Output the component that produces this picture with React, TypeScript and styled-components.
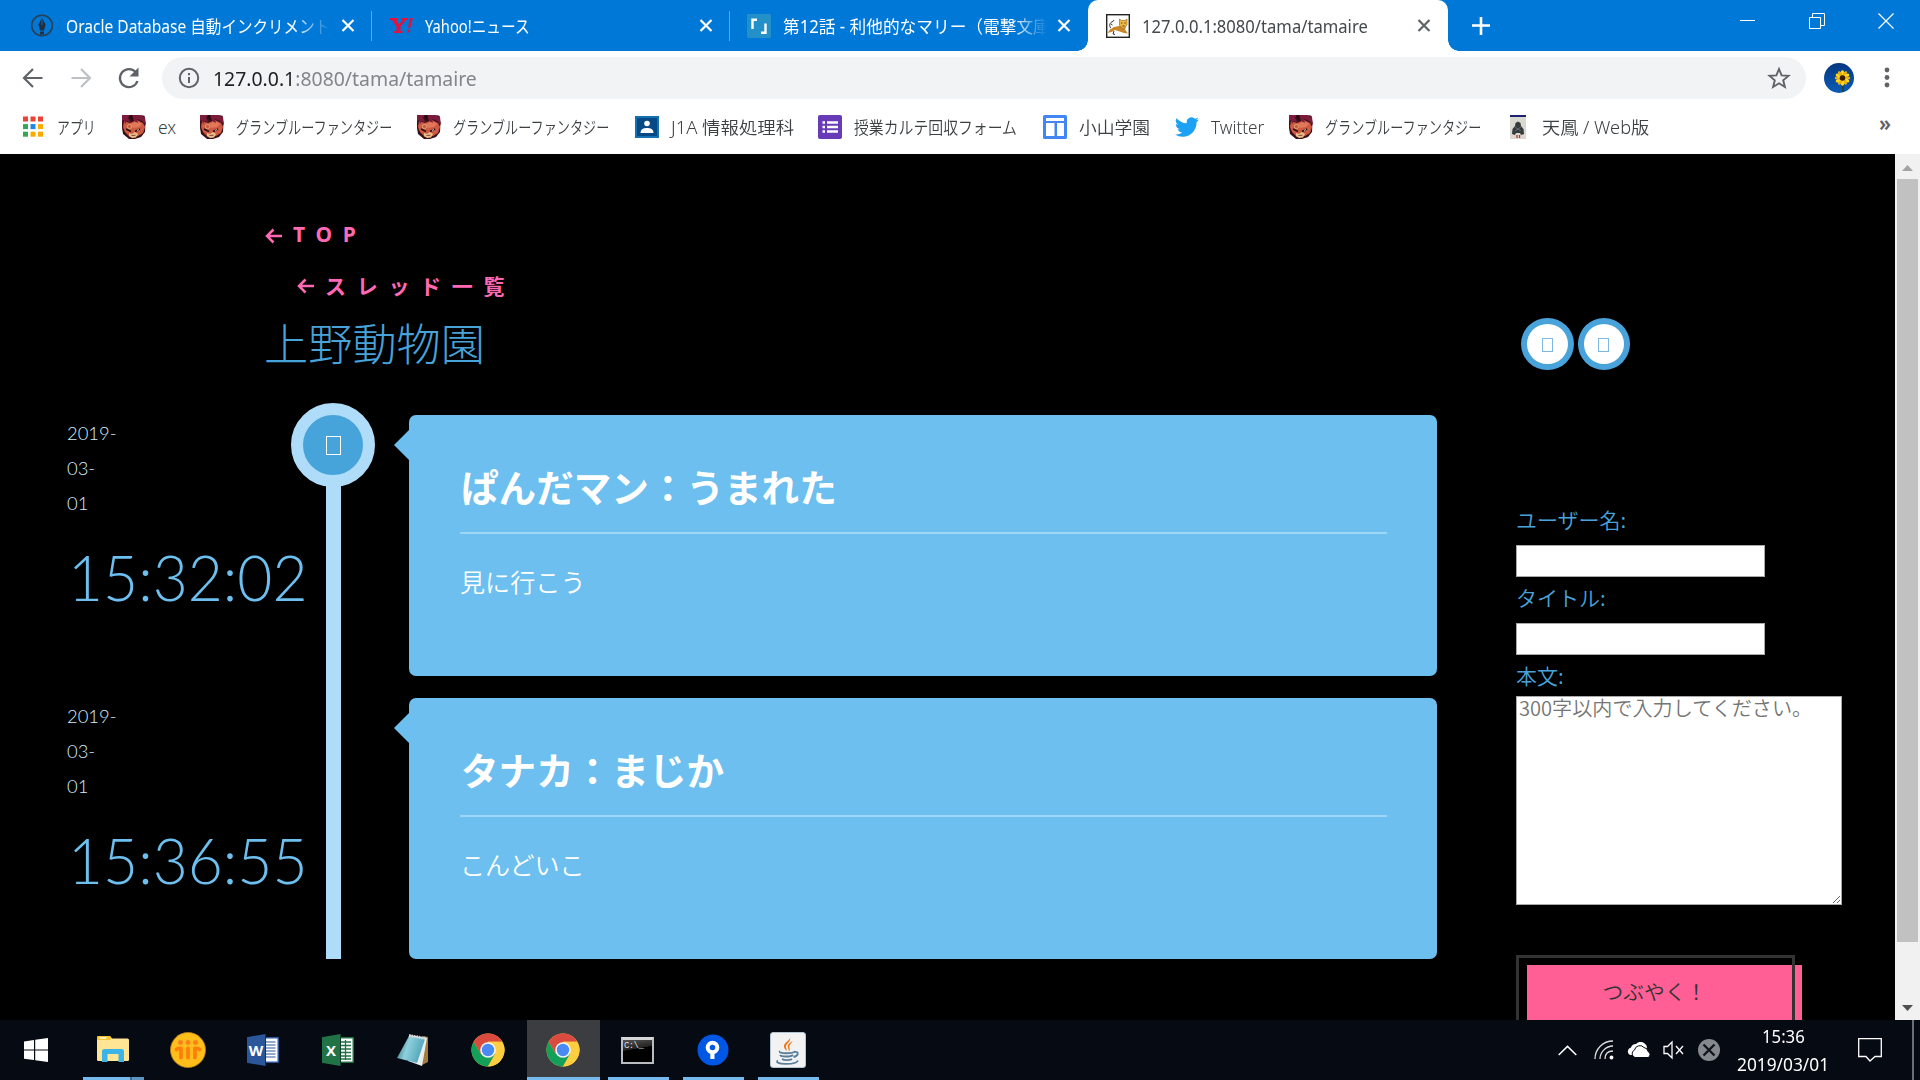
import React, { useLayoutEffect, useRef, useState } from 'react';
import styled, { createGlobalStyle } from 'styled-components';

const ui = `'Noto Sans', 'Noto Sans CJK JP', sans-serif`;
const jp = `'Noto Sans CJK JP', sans-serif`;

const Global = createGlobalStyle`
  *, *::before, *::after { box-sizing: border-box; }
  body { margin: 0; background: #000; font-family: ${ui}; overflow: hidden; }
  svg { display: block; flex: none; }
`;

/* ---------- text that is condensed to a given width ---------- */
const FitBox = styled.span<{ $w: number }>`
  display: block; flex: none; width: ${p => p.$w}px; white-space: nowrap;
`;
const FitInner = styled.span`
  display: inline-block; transform-origin: left center;
`;
function Fit({ w, children }: { w: number; children: React.ReactNode }) {
  const ref = useRef<HTMLSpanElement>(null);
  const [scale, setScale] = useState(1);
  useLayoutEffect(() => {
    if (ref.current) setScale(w / ref.current.offsetWidth);
  }, [w]);
  return <FitBox $w={w}><FitInner ref={ref} style={{ transform: `scaleX(${scale})` }}>{children}</FitInner></FitBox>;
}

const Screen = styled.div`
  width: 1920px; height: 1080px; display: flex; flex-direction: column; overflow: hidden; background: #000;
`;

/* ---------- tab strip ---------- */
const TabStrip = styled.header`
  height: 51px; flex: none; display: flex; background: #0078d7; color: #fff;
`;
const Tab = styled.div<{ $w: number; $pl: number; $sep?: boolean }>`
  width: ${p => p.$w}px; height: 51px; flex: none; display: flex; align-items: center;
  padding: 0 17px 0 ${p => p.$pl}px; font-size: 17.5px;
  background: linear-gradient(#5aa9e6, #5aa9e6) right 11px / ${p => (p.$sep ? '1.5px 30px' : '0 0')} no-repeat;
`;
const ActiveTab = styled(Tab)`
  background: #fff; color: #45494d; border-radius: 10px 10px 0 0; position: relative;
  &::before, &::after {
    content: ''; position: absolute; bottom: 0; width: 11px; height: 11px;
  }
  &::before { left: -11px; background: radial-gradient(circle at 0 0, #0078d7 10.5px, #fff 11px); }
  &::after { right: -11px; background: radial-gradient(circle at 100% 0, #0078d7 10.5px, #fff 11px); }
`;
const Favicon = styled.span`
  width: 24px; height: 24px; flex: none; margin-right: 12px; display: flex; align-items: center; justify-content: center;
`;
const TabTitle = styled.span<{ $fade?: boolean }>`
  flex: 1; min-width: 0; overflow: hidden; margin-top: 0;
  ${p => p.$fade && 'mask-image: linear-gradient(90deg, #000 228px, transparent 264px);'}
`;
const NewTab = styled.div`
  width: 65px; display: flex; align-items: center; justify-content: center;
`;
const Caption = styled.div`
  margin-left: auto; display: flex; align-items: flex-start; padding-top: 13px;
`;
const CaptionButton = styled.span`
  width: 69px; display: flex; justify-content: center;
`;

/* ---------- toolbar ---------- */
const Toolbar = styled.div`
  height: 54px; flex: none; background: #fff; display: flex; align-items: center; padding: 0 20px 0 20px;
`;
const NavButtons = styled.div`
  width: 142px; display: flex; gap: 22px; align-items: center;
`;
const Omnibox = styled.div`
  width: 1644px; height: 42px; border-radius: 21px; background: #f1f3f4; display: flex; align-items: center;
  padding: 0 15px 0 15px; font-size: 20px; color: #80868b;
`;
const Url = styled.div`
  flex: 1; margin-left: 12px; b { font-weight: 400; color: #202124; }
`;
const Avatar = styled.div`
  margin: 0 30px 0 18px;
`;

const Bookmarks = styled.nav`
  height: 49px; flex: none; background: #fff; display: flex; padding-left: 21px; color: #3c4043; font-size: 17.5px;
  font-weight: 350;
`;
const Bookmark = styled.div<{ $w: number }>`
  width: ${p => p.$w}px; flex: none; height: 43px; display: flex; align-items: center; gap: 12px;
`;
const More = styled.div`
  margin-left: auto; padding: 0 29px 0 0; font-size: 21px; font-weight: 600; line-height: 36px; color: #5f6368;
`;

/* ---------- page ---------- */
const Viewport = styled.main`
  height: 866px; flex: none; display: flex; background: #000; overflow: hidden;
`;
const Content = styled.div`
  width: 1437px; flex: none; display: flex; flex-direction: column;
`;
const PageHead = styled.div`
  height: 261px; padding: 54px 0 0 265px; display: flex; flex-direction: column;
`;
const BackLink = styled.a<{ $indent: number }>`
  display: flex; align-items: center; height: ${p => (p.$indent ? 49 : 52)}px; margin-left: ${p => p.$indent}px;
  font: 700 21px ${ui}; letter-spacing: 10.7px; color: #ff69b4; white-space: nowrap;
`;
const Arrow = styled.span`
  width: 28px; display: flex; padding-top: 3px;
`;
const Thread = styled.h1`
  margin: 2px 0 0 -1px; font: 300 44.200px/62px ${jp}; color: #47a3da;
`;
const Timeline = styled.div`
  display: grid; grid-template-columns: 326px 15px 1fr; grid-template-rows: 544px; height: 544px;
`;
const Times = styled.div`
  display: grid; grid-auto-rows: 283px; padding-left: 67px; height: 544px;
`;
const Time = styled.div`
  display: flex; flex-direction: column; white-space: nowrap; padding-top: 1px;
`;
const Day = styled.div`
  width: 54px; white-space: normal; font: 300 18.400px/35px Lato, sans-serif; color: #d3ecfb;
`;
const Clock = styled.div`
  font: 300 62.500px/76px Lato, sans-serif; color: #6cbfee; margin: 18px 0 0 1px;
`;
const Rail = styled.div`
  background: #afdcf8; position: relative; z-index: 1;
`;
const Knot = styled.div`
  position: absolute; left: -35px; top: -12px; width: 84px; height: 84px; border-radius: 50%;
  background: #46a4da; border: 12px solid #afdcf8; display: flex; align-items: center; justify-content: center;
`;
const Missing = styled.i<{ $w: number; $h: number; $c: string }>`
  display: block; width: ${p => p.$w}px; height: ${p => p.$h}px; border: 1px solid ${p => p.$c};
`;
const Cards = styled.div`
  display: flex; flex-direction: column; gap: 22px; padding-left: 68px;
`;
const Card = styled.article`
  height: 261px; border-radius: 7px; background: #6cbfee; color: #fff; padding: 42px 50px 0 51px; position: relative;
  &::before {
    content: ''; position: absolute; left: -15px; top: 15px;
    border: solid transparent; border-width: 15px 15px 15px 0; border-right-color: #6cbfee;
  }
`;
const CardTitle = styled.h2`
  margin: 0; height: 77px; padding-left: 1px; border-bottom: 2px solid #9ed6f6; font: 700 37.6px/58px ${jp};
`;
const CardBody = styled.p`
  margin: 28px 0 0; font: 350 25.100px/38px ${jp};
`;

const Side = styled.aside`
  width: 458px; flex: none; padding: 164px 0 0 79px; display: flex; flex-direction: column;
`;
const Circles = styled.div`
  display: flex; gap: 4px; padding-left: 5px; height: 176px; flex: none;
`;
const Circle = styled.span`
  width: 52.500px; height: 52px; border-radius: 50%; border: 6px solid #47a3da; background: #fff;
  display: flex; align-items: center; justify-content: center; padding-top: 2px;
`;
const Field = styled.label`
  display: flex; flex-direction: column; flex: none; height: 78px; font: 350 21px/50px ${jp}; color: #47a3da;
`;
const Input = styled.input`
  width: 249px; height: 32px; flex: none; border: 1px solid #a9a9a9; background: #fff; padding: 0; border-radius: 0; margin-top: 1px;
`;
const Area = styled.textarea`
  width: 326px; height: 209px; flex: none; border: 1px solid #a9a9a9; background: #fff; padding: 0 2px; border-radius: 0; outline: 0;
  font: 350 20.100px/22px ${jp}; margin-top: -4px; resize: both;
  &::placeholder { color: #757575; }
`;
const SubmitRow = styled.div`
  padding: 237px 0 0 11px; display: flex; flex: none;
`;
const Submit = styled.button`
  position: relative; width: 275px; height: 80px; flex: none; border: 0; background: #ff5f95; color: #333;
  font: 350 20.800px/30px ${jp}; display: flex; justify-content: center; align-items: flex-start; padding: 11px 20px 0 0;
  &::before {
    content: ''; position: absolute; left: -11px; top: -10px; width: 279px; height: 80px; border: 3px solid #333;
  }
`;
const Scrollbar = styled.div`
  width: 25px; flex: none; background: #f1f1f1; display: flex; flex-direction: column; align-items: center;
`;
const Thumb = styled.div`
  width: 21px; height: 763px; background: #c1c1c1;
`;
const ArrowBox = styled.span`
  height: 25px; display: flex; align-items: center; padding-top: 2px;
`;
const ArrowFoot = styled.span`
  margin-top: auto; padding-bottom: 9px;
`;

/* ---------- taskbar ---------- */
const Taskbar = styled.footer`
  height: 60px; flex: none; background: #060b13; display: flex; color: #fff;
`;
const Task = styled.div<{ $active?: boolean; $running?: boolean; $split?: boolean }>`
  width: 73px; margin-right: 2px; padding-right: 2px; height: 60px; flex: none; display: flex; align-items: center; justify-content: center;
  background:
    linear-gradient(90deg, #76b9ed ${p => (p.$split ? '47px, #3f6a90 47px, #3f6a90 49px, #5f94c2 49px' : '0 100%')})
    center bottom / ${p => (p.$active ? '73px 3px' : p.$running ? '61px 3px' : '0 0')} no-repeat
    ${p => (p.$active ? '#3b3d41' : 'transparent')};
`;
const Start = styled(Task)`
  width: 72px; margin-right: 5px; padding-right: 0;
`;
const Tray = styled.div`
  margin-left: auto; display: grid; align-items: center; justify-items: center;
  grid-template-columns: 38px 36px 34px 36px 34px 114px 60px 20px;
`;
const DateTime = styled.div`
  display: flex; flex-direction: column; align-items: center; font-size: 17.5px; line-height: 28px;
`;
const Peek = styled.span`
  width: 2px; height: 60px; background: #6b6f75; justify-self: end; margin-right: 6px;
`;

/* ---------- drawings ---------- */
const Cross = ({ c = '#fff' }) => (
  <svg width="14" height="14" viewBox="0 0 14 14"><path d="M1.5 1l11 11M12.5 1l-11 11" stroke={c} strokeWidth="2.2" /></svg>
);
const Pen = () => (
  <svg width="24" height="24" viewBox="0 0 24 24"><circle cx="12" cy="11.500" r="10.300" fill="none" stroke="#2c3e50" strokeWidth="1.600" />
    <path d="M12 3.500l3.600 7-1.600 6h-4l-1.600-6zM10 17.500h4v3h-4z" fill="#22303d" /><path d="M12 4v7" stroke="#0078d7" strokeWidth=".8" /></svg>
);
const Yahoo = () => (
  <svg width="24" height="18" viewBox="0 0 24 18"><path d="M0 1h9v2H7.600l2.400 4.600L13.500 3H12V1h7v2h-2l-5.500 6.500V14h2v2H5v-2h2.500V9.800L3 3H0zM20.500 1h3.400l-2.700 10h-2zM18.500 12.500h2.800l-.6 3H18z" fill="#e6103c" /></svg>
);
const Brackets = () => (
  <svg width="24" height="24" viewBox="0 0 24 24"><rect width="24" height="24" rx="1" fill="#2490c8" />
    <path d="M5.500 15V5.800H10M18.500 9.500v9.200H14" fill="none" stroke="#fff" strokeWidth="2.400" /></svg>
);
const Tomcat = () => (
  <svg width="24" height="24" viewBox="0 0 24 24"><rect x=".7" y=".7" width="22.600" height="22.600" fill="#fff" stroke="#222" strokeWidth="1.400" />
    <path d="M13 12L8 13l-4 2.500L1.500 19l4-1L9 16l6 2 3 1 4 .5-3-4 1-3z" fill="#c9862a" />
    <path d="M13.500 5l2 1.500h3.500l2-1.500v6l-3.500 4-4-3.500z" fill="#eebb45" stroke="#8a5c14" strokeWidth=".6" />
    <path d="M5 14c-2.500-2-1-6 2-6.500l1-1.500M8 17l-1 3 2 .5M5 10l1.500 1" fill="none" stroke="#333" strokeWidth="1" />
    <path d="M15 9h1.300M18.300 9h1.300M16.500 12h2" stroke="#4a3008" strokeWidth="1" /></svg>
);
const Back = ({ c = '#5f6368', flip = false }) => (
  <svg width="26" height="24" viewBox="0 0 26 24"><path transform={flip ? 'translate(26 0) scale(-1 1)' : undefined} d="M22.500 12H5M13 3l-9 9 9 9" fill="none" stroke={c} strokeWidth="2.200" /></svg>
);
const Reload = () => (
  <svg width="26" height="24" viewBox="0 0 26 24"><path d="M20 6.500A9 9 0 1 0 21.500 15" fill="none" stroke="#5f6368" strokeWidth="2.300" /><path d="M22.500 1.500v9h-9z" fill="#5f6368" /></svg>
);
const Info = () => (
  <svg width="24" height="24" viewBox="0 0 24 24"><circle cx="12" cy="12" r="9.200" fill="none" stroke="#5f6368" strokeWidth="2" /><path d="M12 11v6M12 7v2.200" stroke="#5f6368" strokeWidth="2" /></svg>
);
const Star = () => (
  <svg width="24" height="24" viewBox="0 0 24 24"><path d="M12 3l2.600 6.400 6.900.5-5.300 4.400 1.700 6.700-5.900-3.700L6.100 21l1.700-6.700L2.500 9.900l6.900-.5z" fill="none" stroke="#5f6368" strokeWidth="1.900" /></svg>
);
const Flower = () => (
  <svg width="30" height="30" viewBox="0 0 30 30"><defs><linearGradient id="sky" x2="0" y2="1"><stop stopColor="#06377f" /><stop offset="1" stopColor="#0a5cb8" /></linearGradient></defs>
    <circle cx="15" cy="15" r="15" fill="url(#sky)" /><path d="M18.500 15l.6 14" stroke="#20401c" strokeWidth="1.500" />
    {Array.from({ length: 12 }, (_, i) => <ellipse key={i} cx="18.500" cy="10.500" rx="1.700" ry="3.200" fill={i % 2 ? '#e8b010' : '#ffd91c'} transform={`rotate(${i * 30} 18.5 15)`} />)}
    <circle cx="18.500" cy="15" r="2.800" fill="#3a1c06" /></svg>
);
const Kebab = () => (
  <svg width="6" height="24" viewBox="0 0 6 24"><g fill="#5f6368"><circle cx="3" cy="4" r="2.400" /><circle cx="3" cy="11.500" r="2.400" /><circle cx="3" cy="19" r="2.400" /></g></svg>
);
const Apps = () => {
  const c = ['#ea4335', '#ea4335', '#ea4335', '#34a853', '#1e88e5', '#fbab00', '#34a853', '#fbab00', '#fbab00'];
  return <svg width="24" height="24" viewBox="0 0 24 24">{c.map((f, i) => <rect key={i} x={2 + (i % 3) * 7.500} y={1.500 + Math.floor(i / 3) * 7.600} width="5" height="5" fill={f} />)}</svg>;
};
const Dragon = () => (
  <svg width="24" height="24" viewBox="0 0 24 24">
    <path d="M0 1h22l1.500 7-.5 9-4 5-6 2H7l-6-5-1-6z" fill="#3a1118" />
    <path d="M2 6l6 2 7-3 6 3 2 4-2 6-5 3-8 1-5-5-2-5z" fill="#cf5a42" />
    <path d="M9 9l6-3 5 3-3 3-6 1z" fill="#e2775a" />
    <path d="M0 0h8l-2 3 3 5-4-2-2 3-1-4-2 1zM10 0h9l4 2 1 8-4-4-5-2 1 4-4-2z" fill="#7c1b3a" />
    <path d="M7 0h4l-1 2 2 4-4-3zM19 0l4 1-1 1z" fill="#2b0712" />
    <circle cx="7.500" cy="11.500" r="2.200" fill="none" stroke="#d9a878" strokeWidth=".9" />
    <path d="M4 14l5 2.500M13 16.500l5-2.500" stroke="#2b0d10" strokeWidth="1.400" />
    <path d="M15 15.500l2-1" stroke="#fff" strokeWidth=".8" />
    <path d="M7 18l3 1 3-2 3 2-2 3.500-4 .5-3-2z" fill="#e9c08d" /><path d="M9.500 20.500l4-.3" stroke="#7b3322" strokeWidth=".9" />
  </svg>
);
const Classroom = () => (
  <svg width="24" height="22" viewBox="0 0 24 22"><rect width="24" height="22" fill="#1370b3" /><rect x="2" y="2" width="20" height="18" fill="#064985" />
    <circle cx="12" cy="7.500" r="2.800" fill="#fff" /><path d="M5.500 17c0-4 3-5 6.500-5s6.500 1 6.500 5z" fill="#fff" /></svg>
);
const Forms = () => (
  <svg width="24" height="24" viewBox="0 0 24 24"><rect width="24" height="24" rx="2" fill="#673ab7" /><path d="M4.500 7.500h2.500M9 7.500h11M4.500 12h2.500M9 12h11M4.500 16.500h2.500M9 16.500h11" stroke="#fff" strokeWidth="2.700" /></svg>
);
const Sites = () => (
  <svg width="24" height="24" viewBox="0 0 24 24"><rect width="24" height="24" rx="1.500" fill="#4285f4" /><path d="M3 3h18v3H3zM3 8h8.500v13H3zM14 8h7v13h-7z" fill="#fff" /></svg>
);
const Bird = () => (
  <svg width="24" height="24" viewBox="0 0 24 24"><path fill="#1da1f2" d="M23.950 4.570a10 10 0 0 1-2.820.77 4.960 4.960 0 0 0 2.160-2.720c-.95.550-2 .95-3.130 1.180a4.920 4.920 0 0 0-8.380 4.480C7.690 8.100 4.070 6.130 1.640 3.160a4.920 4.920 0 0 0 1.520 6.570 4.900 4.900 0 0 1-2.230-.61v.06a4.920 4.920 0 0 0 3.950 4.830 5 5 0 0 1-2.210.08 4.940 4.940 0 0 0 4.600 3.420A9.870 9.870 0 0 1 0 19.540a13.990 13.990 0 0 0 7.550 2.210c9.050 0 14-7.500 14-13.980 0-.21 0-.42-.02-.63a9.930 9.930 0 0 0 2.420-2.570z" /></svg>
);
const Tile = () => (
  <svg width="24" height="24" viewBox="0 0 24 24"><rect x="4" width="16" height="24" fill="#d9d9cf" /><rect x="4" width="16" height="2" fill="#1c2270" />
    <path d="M9.500 8l2.500-1.500L14.500 8l.5 3 2.500 3 .5 5-3 1-1-2h-4l-1 2-3-1 .5-5L9 11z" fill="#353a3c" /><path d="M9 12l6 4M15 12l-6 4" stroke="#71777a" strokeWidth=".8" /><path d="M11 20v3M13.500 20v3" stroke="#b33" strokeWidth="1.300" /></svg>
);
const Windows = () => (
  <svg width="24" height="24" viewBox="0 0 24 24"><path d="M0 3.400l10-1.400v9.500H0zM11.200 1.800L24 0v11.500H11.200zM0 12.600h10v9.500L0 20.700zM11.200 12.600H24V24l-12.800-1.800z" fill="#fff" /></svg>
);
const Explorer = () => (
  <svg width="32" height="28" viewBox="0 0 32 28"><path d="M0 1.500Q0 0 1.500 0H13l2 2.500h15.500q1.500 0 1.500 1.500v20q0 1-1.500 1H1.500Q0 25 0 24z" fill="#ffe594" />
    <path d="M0 4V1.500Q0 0 1.500 0H13q2 2 0 4z" fill="#f9c62f" /><path d="M2.500 2h7" stroke="#fff" strokeWidth="1.300" />
    <path d="M5 26V15.500Q5 13 7.500 13h17q2.500 0 2.500 2.500V26h-5.500v-8h-11v8z" fill="#3cb4e7" /></svg>
);
const Iir = () => (
  <svg width="36" height="36" viewBox="0 0 36 36"><circle cx="18" cy="18" r="17.500" fill="#ffbe1a" stroke="#b8821a" strokeWidth=".8" />
    <g fill="#ff7f0c" stroke="#e89a4b" strokeWidth=".5"><circle cx="10.500" cy="10.500" r="2.400" /><circle cx="18" cy="10.500" r="2.400" /><circle cx="25.500" cy="10.500" r="2.400" /></g>
    <path d="M6.500 17.500Q7 16.500 11 16.500V25.500M18 16.500v9M29.500 17.500Q29 16.500 25 16.500V25.500" fill="none" stroke="#ff7f0c" strokeWidth="3.800" strokeLinecap="round" strokeLinejoin="round" /></svg>
);
const OfficeTile = styled.span<{ $c: string }>`
  width: 32px; height: 32px; display: flex; align-items: center;
  font: 700 15px 'Open Sans', sans-serif; color: #fff;
  span { width: 19px; height: 32px; background: ${p => p.$c}; clip-path: polygon(0 10%, 100% 0, 100% 100%, 0 90%); display: flex; align-items: center; justify-content: center; }
`;
const WordSheet = () => (
  <svg width="13" height="26" viewBox="0 0 13 26"><rect width="13" height="26" rx="1" fill="#2b579a" /><rect y="1.500" width="11.500" height="23" fill="#fff" /><path d="M0 5h9.500M0 8h9.500M0 11h9.500M0 14h9.500M0 17h9.500M0 20h9.500" stroke="#2b579a" strokeWidth="1.200" /></svg>
);
const ExcelSheet = () => (
  <svg width="13" height="26" viewBox="0 0 13 26"><rect width="13" height="26" rx="1" fill="#217346" /><rect y="1.500" width="11.500" height="23" fill="#fff" /><path d="M0 5h10M0 8.500h10M0 12h10M0 15.500h10M0 19h10M0 22h10M4.500 3v20" stroke="#217346" strokeWidth="1.300" /></svg>
);
const Notepad = () => (
  <svg width="34" height="34" viewBox="0 0 34 34"><defs><linearGradient id="np" x1="0" x2="1" y2=".3"><stop stopColor="#245b6b" /><stop offset=".45" stopColor="#8fd0dd" /><stop offset="1" stopColor="#4fa5b8" /></linearGradient></defs>
    <path d="M27 3l5 1v25l-6 3z" fill="#a57c3b" /><path d="M14 2l17 3-5 28-14-5z" fill="#e9eef0" /><path d="M13 3l16 3-8 24L1 25z" fill="url(#np)" /><path d="M13 2.500l17 3" stroke="#d5d8d8" strokeWidth="3" strokeDasharray="1.500 1" /></svg>
);
const Chrome = () => (
  <svg width="34" height="34" viewBox="0 0 34 34"><circle cx="17" cy="17" r="16.500" fill="#ffcd40" />
    <path d="M2.710 8.750A16.500 16.500 0 0 1 31.300 8.750H17L9.860 21.120z" fill="#db4a3f" />
    <path d="M2.710 8.750A16.500 16.500 0 0 0 17 33.500l7.140-12.380H9.860z" fill="#15a05a" />
    <path d="M31.300 8.750A16.500 16.500 0 0 1 17 33.500l7.140-12.380L17 8.750z" fill="#ffcd40" />
    <circle cx="17" cy="17" r="7.800" fill="#f4f4f4" /><circle cx="17" cy="17" r="6.200" fill="#4a8af4" /></svg>
);
const ConsoleBox = styled.span`
  width: 33px; height: 27px; border: 2px solid #b9bcc0; border-top: 3px solid #d4d6d8; background: linear-gradient(170deg, #555 0, #222 40%, #000 41%);
  font: 9px/9px 'Liberation Mono', monospace; color: #ddd; padding: 2px 0 0 1px; letter-spacing: -.6px; white-space: nowrap;
`;
const SourceTree = () => (
  <svg width="32" height="32" viewBox="0 0 32 32"><circle cx="16" cy="16" r="15.500" fill="#0057e6" /><circle cx="15.500" cy="13.500" r="4.800" fill="none" stroke="#fff" strokeWidth="4" /><path d="M13.300 17h4.200v8h-4.200z" fill="#fff" /></svg>
);
const Java = () => (
  <svg width="36" height="36" viewBox="0 0 36 36"><rect x=".5" y=".5" width="35" height="35" rx="2.500" fill="#f2f2f2" stroke="#b2c4cf" />
    <path d="M20 4c2 4-7 6-6 11 .3 2 2 3 3 4-.5-3-2-4 0-7 2-2 4-4 3-8zM23 9c-4 2-6 4-5 7 .5 1.500 1.500 2 .5 4 3-3 0-4 1-6 .5-2 2-3 3.500-5z" fill="#ea7a1c" />
    <path d="M10 19c-3 3 14 3 15 0M10 23c1 2 11 2 13 0M12 27c2 1.500 8 1.500 10 0M24.500 20c5-1 4 4-1 5M8 28.500c-6 4 18 5 20 0" fill="none" stroke="#5a7f9d" strokeWidth="1.800" /></svg>
);
const LinkArrow = () => (
  <svg width="18" height="16" viewBox="0 0 18 16"><path d="M17 8H2M8.500 1.500L2 8l6.500 6.500" fill="none" stroke="#ff69b4" strokeWidth="2.500" /></svg>
);

const bookmarks: [React.ReactNode, string, number, number][] = [
  [<Apps />, 'アプリ', 39, 101],
  [<Dragon />, 'ex', 18, 78],
  [<Dragon />, 'グランブルーファンタジー', 156, 217],
  [<Dragon />, 'グランブルーファンタジー', 156, 218],
  [<Classroom />, 'J1A 情報処理科', 123, 183],
  [<Forms />, '授業カルテ回収フォーム', 163, 225],
  [<Sites />, '小山学園', 71, 132],
  [<Bird />, 'Twitter', 53, 114],
  [<Dragon />, 'グランブルーファンタジー', 156, 217],
  [<Tile />, '天鳳 / Web版', 107, 180],
];
const posts = [
  { time: '15:32:02', title: 'ぱんだマン：うまれた', body: '見に行こう', tw: 376 },
  { time: '15:36:55', title: 'タナカ：まじか', body: 'こんどいこ', tw: 263 },
];

export default function App() {
  return (
    <Screen>
      <Global />
      <TabStrip>
        <Tab $w={372} $pl={30} $sep>
          <Favicon><Pen /></Favicon><TabTitle $fade><Fit w={264}>Oracle Database 自動インクリメント</Fit></TabTitle><Cross />
        </Tab>
        <Tab $w={358} $pl={17} $sep>
          <Favicon><Yahoo /></Favicon><TabTitle><Fit w={105}>Yahoo!ニュース</Fit></TabTitle><Cross />
        </Tab>
        <Tab $w={358} $pl={17}>
          <Favicon><Brackets /></Favicon><TabTitle $fade><Fit w={267}>第12話 - 利他的なマリー（電撃文庫</Fit></TabTitle><Cross />
        </Tab>
        <ActiveTab $w={360} $pl={18}>
          <Favicon><Tomcat /></Favicon><TabTitle><Fit w={226}>127.0.0.1:8080/tama/tamaire</Fit></TabTitle><Cross c="#5f6368" />
        </ActiveTab>
        <NewTab><svg width="18" height="18" viewBox="0 0 18 18"><path d="M9 0v18M0 8.500h18" stroke="#fff" strokeWidth="2.600" /></svg></NewTab>
        <Caption>
          <CaptionButton><svg width="15" height="15"><path d="M0 7.500h15" stroke="#fff" /></svg></CaptionButton>
          <CaptionButton><svg width="16" height="16"><path d="M.5 4.500h11v11H.5zM3.500 4V.5h12v12H12" fill="none" stroke="#fff" /></svg></CaptionButton>
          <CaptionButton><svg width="16" height="16"><path d="M.5.5l15 15M15.500.5l-15 15" stroke="#fff" strokeWidth="1.200" /></svg></CaptionButton>
        </Caption>
      </TabStrip>
      <Toolbar>
        <NavButtons><Back /><Back c="#bdc1c6" flip /><Reload /></NavButtons>
        <Omnibox>
          <Info /><Url><Fit w={264}><b>127.0.0.1</b>:8080/tama/tamaire</Fit></Url><Star />
        </Omnibox>
        <Avatar><Flower /></Avatar>
        <Kebab />
      </Toolbar>
      <Bookmarks>
        {bookmarks.map(([icon, label, w, slot], i) => (
          <Bookmark key={i} $w={slot}>{icon}<Fit w={w}>{label}</Fit></Bookmark>
        ))}
        <More>»</More>
      </Bookmarks>
      <Viewport>
        <Content>
          <PageHead>
            <BackLink $indent={0}><Arrow><LinkArrow /></Arrow>TOP</BackLink>
            <BackLink $indent={32}><Arrow><LinkArrow /></Arrow>スレッド一覧</BackLink>
            <Thread>上野動物園</Thread>
          </PageHead>
          <Timeline>
            <Times>
              {posts.map(p => (
                <Time key={p.time}><Day>2019-<br />03-<br />01</Day><Clock><Fit w={240}>{p.time}</Fit></Clock></Time>
              ))}
            </Times>
            <Rail><Knot><Missing $w={15} $h={19} $c="#fff" /></Knot></Rail>
            <Cards>
              {posts.map(p => (
                <Card key={p.time}><CardTitle><Fit w={p.tw}>{p.title}</Fit></CardTitle><CardBody>{p.body}</CardBody></Card>
              ))}
            </Cards>
          </Timeline>
        </Content>
        <Side>
          <Circles>
            <Circle><Missing $w={11} $h={14} $c="#7fb8e4" /></Circle>
            <Circle><Missing $w={11} $h={14} $c="#7fb8e4" /></Circle>
          </Circles>
          <Field>ユーザー名:<Input /></Field>
          <Field>タイトル:<Input /></Field>
          <Field as="div">本文:<Area placeholder="300字以内で入力してください。" /></Field>
          <SubmitRow><Submit>つぶやく！</Submit></SubmitRow>
        </Side>
        <Scrollbar>
          <ArrowBox><svg width="11" height="6"><path d="M0 6l5.500-6L11 6z" fill="#a3a3a3" /></svg></ArrowBox>
          <Thumb />
          <ArrowFoot><svg width="11" height="6"><path d="M0 0l5.500 6L11 0z" fill="#505050" /></svg></ArrowFoot>
        </Scrollbar>
      </Viewport>
      <Taskbar>
        <Start><Windows /></Start>
        <Task $running $split><Explorer /></Task>
        <Task><Iir /></Task>
        <Task><OfficeTile $c="#2b579a"><span>W</span><WordSheet /></OfficeTile></Task>
        <Task><OfficeTile $c="#217346"><span>X</span><ExcelSheet /></OfficeTile></Task>
        <Task><Notepad /></Task>
        <Task><Chrome /></Task>
        <Task $active><Chrome /></Task>
        <Task $running><ConsoleBox>C:\_</ConsoleBox></Task>
        <Task $running><SourceTree /></Task>
        <Task $running><Java /></Task>
        <Tray>
          <svg width="19" height="11"><path d="M.7 10l8.800-8.600L18.300 10" fill="none" stroke="#fff" strokeWidth="1.500" /></svg>
          <svg width="20" height="20"><g fill="none" stroke="#ddd" strokeWidth="1.300"><path d="M1 19C1 9 9 1 19 1M6 19C6 12 12 6 19 6M11 19c0-5 3-8 8-8" /></g><circle cx="17.500" cy="17.500" r="1.900" fill="#fff" /></svg>
          <svg width="25" height="16" viewBox="0 0 25 16"><path d="M3 13a4 4 0 0 1 1-7.500A5 5 0 0 1 9 2a6 6 0 0 1 9-.2q2 1.400 2 4.200L9 13z" fill="#fff" /><path d="M8 15.500a4 4 0 0 1-.5-7.500A5.500 5.500 0 0 1 17 5.500q3.500.5 4 4a3.200 3.200 0 0 1 0 6z" fill="#fff" stroke="#060b13" strokeWidth="1" /></svg>
          <svg width="22" height="20"><path d="M1 6.500h3.500L9 2v16l-4.500-4.500H1zM13 6l7 8M20 6l-7 8" fill="none" stroke="#fff" strokeWidth="1.300" /></svg>
          <svg width="22" height="22"><circle cx="11" cy="11" r="11" fill="#85888c" /><path d="M5.500 5.500l11 11M16.500 5.500l-11 11" stroke="#10151c" strokeWidth="2.300" /></svg>
          <DateTime><Fit w={43}>15:36</Fit><Fit w={92}>2019/03/01</Fit></DateTime>
          <svg width="24" height="24"><path d="M.7.700h22.600v17.800h-6.300l-5 4.500-4-4.500H.7z" fill="none" stroke="#fff" strokeWidth="1.300" /></svg>
          <Peek />
        </Tray>
      </Taskbar>
    </Screen>
  );
}
